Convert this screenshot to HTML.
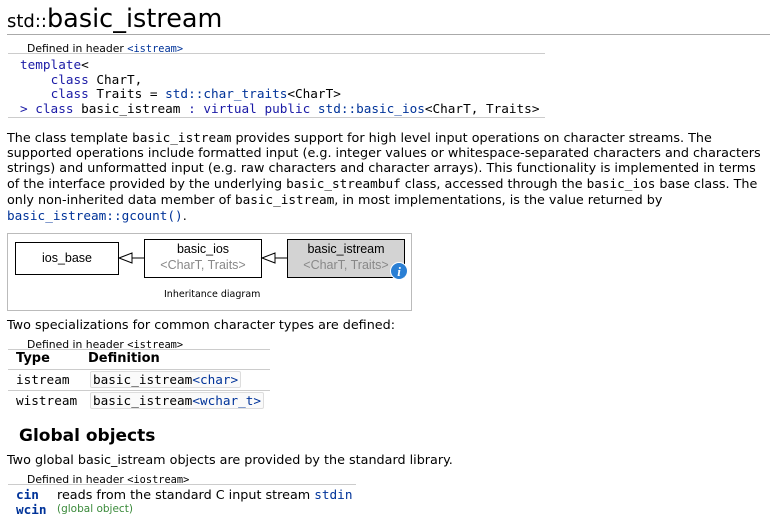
<!DOCTYPE html>
<html><head><meta charset="utf-8"><style>
*{margin:0;padding:0;box-sizing:border-box}
body{width:777px;height:520px;background:#fff;font-family:"DejaVu Sans","Liberation Sans",sans-serif;color:#000;position:relative;overflow:hidden}
.a{position:absolute;white-space:nowrap}
.m{font-family:"DejaVu Sans Mono","Liberation Mono",monospace;font-size:12.7px}
.kw{color:#1a1aa6}
.ln{color:#003399}
.hl{position:absolute;height:1px;background:#ccc}
.p{font-size:12.75px;line-height:15px}
.sm{font-size:10.8px}
.box{position:absolute;border:1px solid #000;font-family:"Liberation Sans",sans-serif;font-size:12.5px;text-align:center;line-height:16px}
.g{color:#888}
.code{border:1px solid #ddd;border-radius:2px;padding:0 2px;background:#fafafa}
</style></head><body>
<div class="a" style="left:7px;top:3px;font-size:25.5px;line-height:32px"><span style="font-size:18px">std::</span>basic_istream</div>
<div class="hl" style="left:7px;top:34px;width:763px;background:#aaa"></div>
<div class="a sm" style="left:27px;top:42px">Defined in header <span class="m ln" style="font-size:10.3px">&lt;istream&gt;</span></div>
<div class="hl" style="left:8px;top:53px;width:537px"></div>
<div class="a m" style="left:20px;top:58px;line-height:14.5px"><span class="kw">template</span>&lt;<br>&nbsp;&nbsp;&nbsp;&nbsp;<span class="kw">class</span> CharT,<br>&nbsp;&nbsp;&nbsp;&nbsp;<span class="kw">class</span> Traits = <span class="ln">std::char_traits</span>&lt;CharT&gt;<br><span class="kw">&gt; class</span> basic_istream <span class="kw">: virtual public</span> <span class="ln">std::basic_ios</span>&lt;CharT, Traits&gt;</div>
<div class="hl" style="left:8px;top:117px;width:537px"></div>
<div class="a p" style="left:7px;top:130px;white-space:normal;width:763px">The class template <span class="m">basic_istream</span> provides support for high level input operations on character streams. The supported operations include formatted input (e.g. integer values or whitespace-separated characters and characters strings) and unformatted input (e.g. raw characters and character arrays). This functionality is implemented in terms of the interface provided by the underlying <span class="m">basic_streambuf</span> class, accessed through the <span class="m">basic_ios</span> base class. The only non-inherited data member of <span class="m">basic_istream</span>, in most implementations, is the value returned by <span class="m ln">basic_istream::gcount()</span>.</div>
<div class="a" style="left:7px;top:233px;width:405px;height:78px;border:1px solid #bbb"></div>
<div class="box" style="left:15px;top:242px;width:104px;height:33px;line-height:31px">ios_base</div>
<div class="box" style="left:144px;top:239px;width:118px;height:39px;padding-top:1px">basic_ios<br><span class="g">&lt;CharT, Traits&gt;</span></div>
<div class="box" style="left:287px;top:239px;width:118px;height:39px;padding-top:1px;background:#d3d3d3">basic_istream<br><span class="g">&lt;CharT, Traits&gt;</span></div>
<svg class="a" style="left:0;top:230px" width="420" height="60">
<path d="M119 28 L132 23 L132 33 Z M132 28 L144 28" fill="#fff" stroke="#000"/>
<path d="M262 28 L275 23 L275 33 Z M275 28 L287 28" fill="#fff" stroke="#000"/>
<circle cx="399" cy="41" r="8.5" fill="#2a7fd4" stroke="#fff" stroke-width="1"/>
<text x="399" y="46" font-family="Liberation Serif" font-style="italic" font-weight="bold" font-size="13" fill="#fff" text-anchor="middle">i</text>
</svg>
<div class="a" style="left:164px;top:289px;font-size:9.5px">Inheritance diagram</div>
<div class="a p" style="left:7px;top:318px">Two specializations for common character types are defined:</div>
<div class="a sm" style="left:27px;top:338px">Defined in header <span class="m" style="font-size:10.3px">&lt;istream&gt;</span></div>
<div class="hl" style="left:8px;top:349px;width:262px"></div>
<div class="a" style="left:16px;top:351px;font-size:13px;font-weight:bold">Type</div>
<div class="a" style="left:88px;top:351px;font-size:13px;font-weight:bold">Definition</div>
<div class="hl" style="left:8px;top:369px;width:262px"></div>
<div class="a m" style="left:16px;top:372px">istream</div>
<div class="a m code" style="left:90px;top:371px">basic_istream<span class="ln">&lt;char&gt;</span></div>
<div class="hl" style="left:8px;top:390px;width:262px"></div>
<div class="a m" style="left:16px;top:393px">wistream</div>
<div class="a m code" style="left:90px;top:392px">basic_istream<span class="ln">&lt;wchar_t&gt;</span></div>
<div class="a" style="left:19px;top:426px;font-size:17px;font-weight:bold">Global objects</div>
<div class="a p" style="left:7px;top:453px">Two global basic_istream objects are provided by the standard library.</div>
<div class="a sm" style="left:27px;top:473px">Defined in header <span class="m" style="font-size:10.3px">&lt;iostream&gt;</span></div>
<div class="hl" style="left:8px;top:484px;width:348px"></div>
<div class="a m ln" style="left:16px;top:487px;font-weight:bold">cin</div>
<div class="a" style="left:57px;top:487px;font-size:12.75px">reads from the standard C input stream <span class="m ln">stdin</span></div>
<div class="a m ln" style="left:16px;top:502px;font-weight:bold">wcin</div>
<div class="a" style="left:57px;top:503px;font-size:10.5px;color:#3a8a3a">(global object)</div>
</body></html>
